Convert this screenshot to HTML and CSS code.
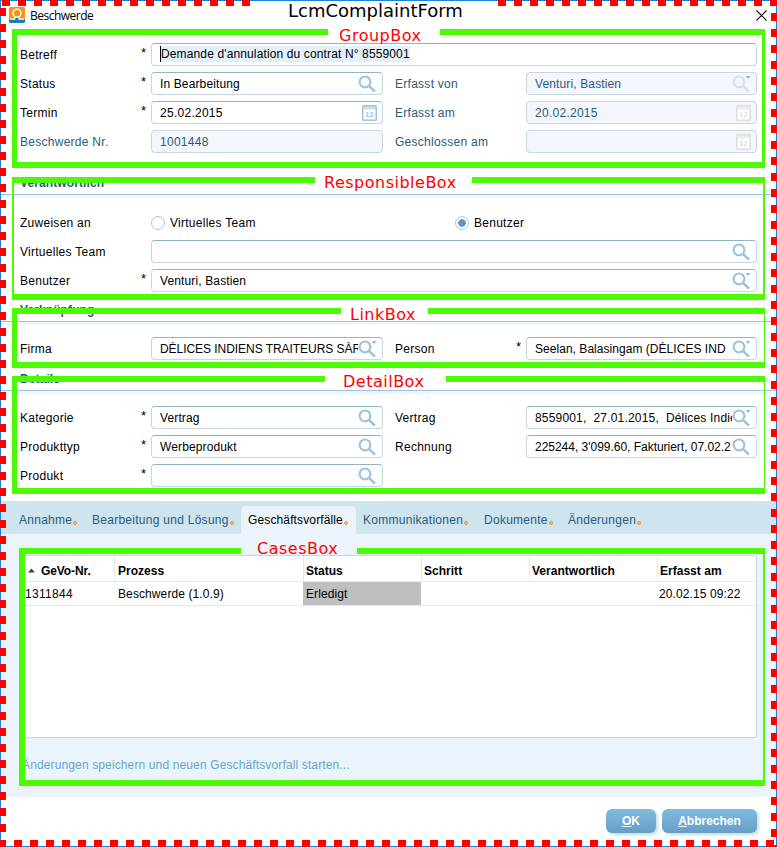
FILE: index.html
```html
<!DOCTYPE html>
<html lang="de">
<head>
<meta charset="utf-8">
<title>Beschwerde</title>
<link rel="stylesheet" href="styles.css">
</head>
<body>
<svg class="defs" aria-hidden="true">
  <symbol id="lens" viewBox="0 0 20 18">
    <circle cx="7" cy="6.900" r="5.400" fill="none" stroke="currentColor" stroke-width="2.200"/>
    <path d="M10.800 10.800 L17 16.600" fill="none" stroke="currentColor" stroke-width="2.600"/>
  </symbol>
  <symbol id="lensmore" viewBox="0 0 20 18">
    <circle cx="7" cy="6.900" r="5.400" fill="none" stroke="currentColor" stroke-width="2.200"/>
    <path d="M10.800 10.800 L17 16.600" fill="none" stroke="currentColor" stroke-width="2.600"/>
    <path d="M13.500 1h5l-2.500 3z" fill="#8fbbdc"/>
  </symbol>
  <symbol id="cal" viewBox="0 0 15 16">
    <rect x=".75" y=".75" width="13.500" height="14.500" rx="1" fill="#fff" stroke="currentColor" stroke-width="1.500"/>
    <path d="M1 1h13v3.500H1z" fill="currentColor" opacity=".55"/>
    <text x="7.500" y="12.200" text-anchor="middle" font-size="7.500" letter-spacing="0" font-weight="bold" font-family="Liberation Sans, sans-serif" fill="currentColor">12</text>
  </symbol>
</svg>
<div class="window">
  <header class="titlebar">
    <svg class="logo" width="16" height="16" viewBox="0 0 16 16">
      <rect width="16" height="12" rx="1.500" fill="#f7941e"/>
      <path d="M0 12h6V10h4v2h6v2.500a1.500 1.500 0 0 1-1.500 1.500h-13A1.500 1.500 0 0 1 0 14.500z" fill="#1982a5"/>
      <circle cx="8" cy="6.200" r="3.900" fill="#f7941e" stroke="#fff" stroke-width="1.500"/>
      <path d="M1 12.200h4.700L6.500 9.500M15 12.200h-4.700L9.500 9.500" fill="none" stroke="#fff" stroke-width="1.200"/>
    </svg>
    <span class="caption">Beschwerde</span>
    <svg class="close" width="11" height="11" viewBox="0 0 11 11"><path d="M.5.5l10 10M10.500.5l-10 10" stroke="#111" stroke-width="1.100"/></svg>
  </header>

  <section class="grid general">
    <label>Betreff</label><i>*</i><div class="field wide"><span class="sel">Demande d'annulation du contrat N° 8559001</span></div>
    <label>Status</label><i>*</i><div class="field"><span>In Bearbeitung</span><svg class="ico"><use href="#lens"/></svg></div>
    <label class="ro r">Erfasst von</label><i></i><div class="field off"><span>Venturi, Bastien</span><svg class="ico"><use href="#lensmore"/></svg></div>
    <label>Termin</label><i>*</i><div class="field num"><span>25.02.2015</span><svg class="ico cal"><use href="#cal"/></svg></div>
    <label class="ro r">Erfasst am</label><i></i><div class="field off num"><span>20.02.2015</span><svg class="ico cal"><use href="#cal"/></svg></div>
    <label class="ro">Beschwerde Nr.</label><i></i><div class="field off num"><span>1001448</span></div>
    <label class="ro r">Geschlossen am</label><i></i><div class="field off"><span></span><svg class="ico cal"><use href="#cal"/></svg></div>
  </section>

  <h2 class="h-resp">Verantwortlich</h2>
  <section class="grid resp">
    <label>Zuweisen an</label><i></i>
    <div class="radios wide"><span class="radio"><b></b>Virtuelles Team</span><span class="radio on"><b></b>Benutzer</span></div>
    <label>Virtuelles Team</label><i></i><div class="field wide"><span></span><svg class="ico"><use href="#lens"/></svg></div>
    <label>Benutzer</label><i>*</i><div class="field wide"><span>Venturi, Bastien</span><svg class="ico"><use href="#lensmore"/></svg></div>
  </section>

  <h2 class="h-link">Verknüpfung</h2>
  <section class="grid link">
    <label>Firma</label><i></i><div class="field"><span class="t-firm">DÉLICES INDIENS TRAITEURS SÀR</span><svg class="ico"><use href="#lensmore"/></svg></div>
    <label class="r">Person</label><i>*</i><div class="field"><span class="t-person">Seelan, Balasingam (DÉLICES IND</span><svg class="ico"><use href="#lensmore"/></svg></div>
  </section>

  <h2 class="h-detail">Details</h2>
  <section class="grid detail">
    <label>Kategorie</label><i>*</i><div class="field"><span>Vertrag</span><svg class="ico"><use href="#lens"/></svg></div>
    <label class="r">Vertrag</label><i></i><div class="field"><span class="t-contract">8559001,&nbsp; 27.01.2015,&nbsp; Délices Indie</span><svg class="ico"><use href="#lensmore"/></svg></div>
    <label>Produkttyp</label><i>*</i><div class="field"><span>Werbeprodukt</span><svg class="ico"><use href="#lens"/></svg></div>
    <label class="r">Rechnung</label><i></i><div class="field"><span class="t-bill">225244, 3'099.60, Fakturiert, 07.02.2</span><svg class="ico"><use href="#lens"/></svg></div>
    <label>Produkt</label><i>*</i><div class="field"><span></span><svg class="ico"><use href="#lens"/></svg></div>
  </section>

  <nav class="tabs">
    <a class="tab t1">Annahme<em></em></a><a class="tab t2">Bearbeitung und Lösung<em></em></a><a class="tab t3 active">Geschäftsvorfälle<em></em></a><a class="tab t4">Kommunikationen<em></em></a><a class="tab t5">Dokumente<em></em></a><a class="tab t6">Änderungen<em></em></a>
  </nav>
  <section class="panel">
    <div class="table">
      <div class="tr head"><span class="first"><svg width="8" height="5" viewBox="0 0 8 5"><path d="M0 4.500L3.500.5 7 4.500z" fill="#444"/></svg>GeVo-Nr.</span><span>Prozess</span><span>Status</span><span>Schritt</span><span>Verantwortlich</span><span>Erfasst am</span></div>
      <div class="tr"><span class="first">1311844</span><span>Beschwerde (1.0.9)</span><span class="done">Erledigt</span><span></span><span></span><span class="date">20.02.15 09:22</span></div>
    </div>
    <a class="save">Änderungen speichern und neuen Geschäftsvorfall starten...</a>
  </section>
  <footer class="actions">
    <button class="ok"><u>O</u>K</button><button class="cancel"><u>A</u>bbrechen</button>
  </footer>
</div>

<div class="mark dash top a"></div><div class="mark dash top b"></div>
<div class="mark dash left"></div><div class="mark dash right"></div><div class="mark dash bottom"></div>
<div class="mark title">LcmComplaintForm</div>
<div class="mark box b-group"><s></s><s></s><strong>GroupBox</strong></div>
<div class="mark box b-resp"><s></s><s></s><strong>ResponsibleBox</strong></div>
<div class="mark box b-link"><s></s><s></s><strong>LinkBox</strong></div>
<div class="mark box b-detail"><s></s><s></s><strong>DetailBox</strong></div>
<div class="mark box b-cases"><s></s><s></s><strong>CasesBox</strong></div>
</body>
</html>
```
FILE: styles.css
```css
* { box-sizing: border-box; }
body { margin: 0; width: 777px; height: 847px; position: relative; overflow: hidden; background: #fff; font: 12px/14px "Liberation Sans", Arial, sans-serif; letter-spacing: .27px; color: #000; }
.defs { position: absolute; width: 0; height: 0; }
.window { width: 777px; height: 847px; border: 1px solid #1883d7; overflow: hidden; }

.titlebar { height: 42px; display: flex; align-items: flex-start; padding: 6px 9px 0 8px; }
.caption { font: 12px/16px "Open Sans", sans-serif; letter-spacing: -.5px; margin: 1px 0 0 5px; flex: 1; }
.close { margin-top: 3px; }

.grid { display: grid; grid-template-columns: 122px 9px 232px 12px 122px 9px 231px; grid-auto-rows: 23px; row-gap: 6px; padding-left: 19px; }
.grid label { align-self: center; padding-top: 1px; white-space: nowrap; }
.grid label.r { grid-column: 5; }
.grid i { font-style: normal; font-size: 13px; padding-top: 3px; margin-left: -1px; }
.ro { color: #2b5a78; }
.field { display: flex; align-items: center; border: 1px solid #c5d8df; border-top-color: #93b5bf; border-radius: 4px; padding: 0 4px 0 8px; background: #fff; min-width: 0; letter-spacing: .13px; }
.field span { flex: 1; min-width: 0; overflow: hidden; white-space: nowrap; }
.num { letter-spacing: .27px; }
.wide { grid-column: 3 / 8; }
.off { background: #f3f7fd; border-color: #c5d8df; color: #2b5a78; }
.field .sel { flex: none; background: #e4f1fd; border-left: 1px solid #000; line-height: 16px; margin-top: -1px; }
.field .t-firm { letter-spacing: -.05px; }
.field .t-person { letter-spacing: .04px; }
.field .t-contract { letter-spacing: .18px; }
.field .t-bill { letter-spacing: -.02px; }
.ico { width: 20px; height: 18px; color: #9dc3e0; flex: none; }
.ico.cal { width: 15px; height: 16px; margin-right: 1px; }
.off .ico { color: #dcdfe0; }
.general { height: 139px; }

h2 { margin: 0; height: 14px; padding-left: 19px; font-size: 12px; line-height: 14px; color: #2b5a78; letter-spacing: .1px; }
h2::after { content: ""; display: block; margin: 4px 0 0 -19px; height: 3px; background: #f0f5fb; border-top: 1px solid #9dc3e0; }
.h-resp { margin-top: -6px; }
.resp { padding-top: 21px; height: 123px; }
.radios { display: flex; }
.radio { display: flex; align-items: center; width: 303px; gap: 5px; }
.radio b { width: 14px; height: 14px; border-radius: 50%; border: 1px solid #a9cbd5; background: #fff; }
.radio.on { padding-left: 1px; }
.radio.on b { background: radial-gradient(circle, #5f93b8 0 3.5px, #fff 4px); }
.h-link { margin-top: -10px; }
.link { padding-top: 20px; height: 66px; }
.h-detail { margin-top: -11px; }
.detail { padding-top: 20px; height: 115px; }

.tabs { height: 33px; background: #cee4ee; display: flex; align-items: flex-end; }
.tab { height: 28px; padding-top: 7px; color: #2b5a78; white-space: nowrap; flex: none; }
.tab em { display: inline-block; width: 4px; height: 4px; border-radius: 50%; border: 1px solid #f0902c; background: #fbc47a; margin: 0 0 -1px 1px; }
.tab.active { background: #ebf4fa; color: #000; border-radius: 5px 5px 0 0; width: 115px; padding-left: 7px; letter-spacing: .13px; }
.t1 { margin-left: 18px; width: 73px; }
.t2 { width: 149px; }
.t4 { margin-left: 7px; width: 121px; }
.t5 { width: 84px; }
.panel { height: 263px; background: #ebf4fa; padding: 21px 19px 0 19px; }
.table { height: 183px; background: #fff; border: 1px solid #c5d8df; border-radius: 3px; }
.tr { display: grid; grid-template-columns: 93px 189px 118px 108px 128px 1fr; height: 24px; border-bottom: 1px solid #e0ebeb; letter-spacing: .1px; }
.tr > span { padding: 5px 0 0 4px; white-space: nowrap; }
.tr > .first { padding-left: 4px; letter-spacing: .3px; }
.head { height: 26px; font-weight: bold; letter-spacing: .02px; }
.head > span { border-left: 1px solid #e0ebeb; padding: 8px 0 0 3px; }
.head > .first { border: 0; padding-left: 7px; letter-spacing: -.1px; }
.head svg { margin: 0 5px 2px 0; }
.tr .done { background: #bfbfbf; padding-left: 3px; }
.tr > .done + span + span + span, .head > span:nth-child(n+3) { padding-left: 2px; }
.tr > .date { padding-left: 3px; }
.save { display: block; margin: 20px 0 0 2px; color: #66a6cf; letter-spacing: .13px; }
.actions { display: flex; justify-content: flex-end; gap: 6px; padding: 12px 19px 0 0; }
button { height: 24px; border: 0; border-radius: 6px; padding: 0; color: #fff; font: bold 12px "Liberation Sans", sans-serif; background: linear-gradient(#82bbdf, #649fc6); box-shadow: 2px 2px 3px #c8dcea; }
.ok { width: 50px; }
.cancel { width: 95px; }

/* Annotations drawn over the dialog */
.mark { position: absolute; }
.dash { --d: #f00 0 8px, transparent 8px 16px; }
.top { top: 0; height: 6px; background: repeating-linear-gradient(90deg, var(--d)); }
.top.a { left: 2px; width: 248px; }
.top.b { left: 498px; width: 279px; }
.left { left: 0; top: 8px; width: 6px; height: 839px; background: repeating-linear-gradient(180deg, var(--d)); }
.right { left: 771px; top: 13px; width: 6px; height: 834px; background: repeating-linear-gradient(180deg, var(--d)); }
.bottom { left: -2px; top: 840px; width: 779px; height: 7px; background: repeating-linear-gradient(90deg, var(--d)); }
.title { left: 288px; top: 0; font: 18px/21px "DejaVu Sans", sans-serif; letter-spacing: 0; }
.box { left: 12px; width: 753px; border: 0 solid #4cfa05; border-bottom-width: 6px; }
.box s { position: absolute; top: 0; height: 6px; background: #4cfa05; left: calc(0px - var(--bl)); width: var(--g1); }
.box s + s { left: auto; right: calc(0px - var(--br)); width: var(--g2); }
.box { border-left-width: var(--bl); border-right-width: var(--br); }
.box strong { position: absolute; left: var(--tx); top: -4px; font: 16px/20px "DejaVu Sans", sans-serif; letter-spacing: .5px; color: #f00; white-space: nowrap; }
.b-group { top: 29px; height: 139px; --bl: 5px; --br: 3px; --g1: 316px; --g2: 325px; --tx: 322px; }
.b-resp { top: 177px; height: 123px; --bl: 2px; --br: 2px; --g1: 303px; --g2: 293px; --tx: 310px; }
.b-link { top: 308px; height: 60px; --bl: 5px; --br: 1px; --g1: 329px; --g2: 337px; --tx: 333px; }
.b-detail { top: 376px; height: 118px; --bl: 5px; --br: 1px; --g1: 313px; --g2: 319px; --tx: 326px; }
.b-cases { left: 19px; top: 548px; width: 746px; height: 238px; --bl: 6px; --br: 2px; --g1: 222px; --g2: 408px; --tx: 232px; }
.b-group strong, .b-link strong { top: -3px; }
.b-cases strong { top: -9px; }
```
